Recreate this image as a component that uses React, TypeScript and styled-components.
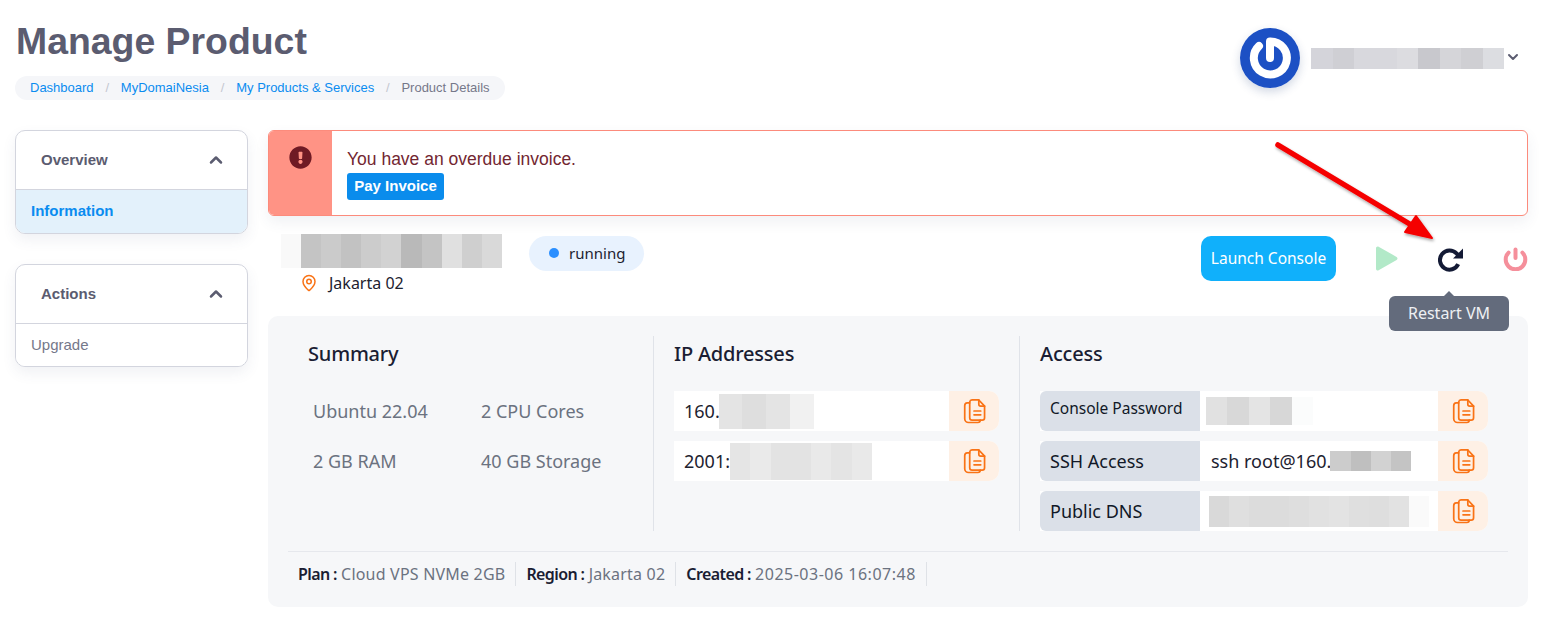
import * as React from 'react';
import styled, { createGlobalStyle } from 'styled-components';
import { ChevronDown, ChevronUp, MapPin } from 'lucide-react';
import { FaExclamationCircle } from 'react-icons/fa';

const GlobalStyle = createGlobalStyle`
    html, body {
        margin: 0;
        padding: 0;
        background: #fff;
        font-family: "Liberation Sans", Arial, sans-serif;
    }
    * {
        box-sizing: border-box;
    }
`;

const contentFont = `"Noto Sans", "Open Sans", sans-serif`;

const Page = styled.div`
    width: 1542px;
    height: 617px;
    padding: 0 14px 0 15px;
    overflow: hidden;
`;

const TopBar = styled.header`
    display: flex;
    justify-content: space-between;
    height: 130px;
`;

const TitleBlock = styled.div`
    padding-top: 19px;
`;

const Title = styled.h1`
    margin: 0 0 12px 1px;
    font-size: 37.4px;
    line-height: 45px;
    font-weight: 700;
    color: #5b5c70;
`;

const Breadcrumb = styled.nav`
    display: inline-flex;
    align-items: center;
    height: 24px;
    padding: 0 15px 2px;
    border-radius: 12px;
    background: #f5f6f9;
    font-size: 13px;
`;

const Crumb = styled.span<{ $current?: boolean }>`
    color: ${(p) => (p.$current ? '#75788a' : '#0a8cf0')};
`;

const CrumbSlash = styled.span`
    margin: 0 11.8px;
    color: #c4c6d0;
`;

const UserMenu = styled.div`
    display: flex;
    align-items: center;
    height: 60px;
    margin: 28px 7px 0 0;
`;

const Avatar = styled.div`
    width: 60px;
    height: 60px;
    margin-right: 11px;
    border-radius: 50%;
    box-shadow: 0 4px 10px rgba(30, 60, 120, 0.2);
    svg {
        display: block;
    }
`;

const UserCaret = styled.span`
    display: flex;
    margin: -3px 0 0 1px;
    color: #5b5c70;
`;

const Columns = styled.div`
    display: grid;
    grid-template-columns: 233px 1260px;
    column-gap: 20px;
`;

const Sidebar = styled.aside`
    display: flex;
    flex-direction: column;
    gap: 30px;
`;

const SideCard = styled.section`
    border: 1px solid #d3d5de;
    border-radius: 10px;
    overflow: hidden;
    background: #fff;
    box-shadow: 0 6px 14px rgba(70, 80, 110, 0.08);
`;

const SideHead = styled.div`
    display: flex;
    align-items: center;
    justify-content: space-between;
    height: 59px;
    padding: 0 21px 1px 25px;
    border-bottom: 1px solid #d3d5de;
    font-size: 15px;
    font-weight: 700;
    color: #5b5c70;
`;

const SideLink = styled.div<{ $active?: boolean }>`
    height: ${(p) => (p.$active ? '43px' : '42px')};
    padding: 0 15px;
    font-size: 15px;
    line-height: 42px;
    font-weight: ${(p) => (p.$active ? 700 : 400)};
    color: ${(p) => (p.$active ? '#0a8cf0' : '#75788a')};
    background: ${(p) => (p.$active ? '#e3f1fb' : '#fff')};
`;

const Main = styled.main`
    position: relative;
`;

const Alert = styled.div`
    display: flex;
    height: 86px;
    border: 1px solid #fc8b7c;
    border-radius: 6px;
    overflow: hidden;
    background: #fff;
    box-shadow: 0 6px 14px rgba(70, 80, 110, 0.08);
`;

const AlertIcon = styled.div`
    display: flex;
    justify-content: center;
    width: 63px;
    padding-top: 15px;
    background: #ff9385;
    color: #6f1a24;
`;

const AlertBody = styled.div`
    padding: 18px 15px 0;
    color: #722631;
    font-size: 17.5px;
    line-height: 20px;
`;

const PayButton = styled.span`
    display: block;
    width: 97px;
    height: 27px;
    margin-top: 4px;
    border-radius: 3px;
    background: #0a8cec;
    color: #fff;
    font-size: 15px;
    font-weight: 700;
    line-height: 25px;
    text-align: center;
`;

const VmBar = styled.div`
    display: flex;
    justify-content: space-between;
    height: 100px;
    padding-top: 18px;
    font-family: ${contentFont};
`;

const VmInfo = styled.div`
    display: flex;
    align-items: flex-start;
    padding-left: 13px;
`;

const VmName = styled.div`
    display: flex;
    flex-direction: column;
    width: 248px;
`;

const Location = styled.div`
    display: flex;
    align-items: center;
    gap: 11px;
    margin: 4px 0 0 19px;
    color: #1d2230;
    font-size: 16px;
    line-height: 22px;
    svg {
        color: #f97316;
    }
`;

const StatusPill = styled.div`
    display: flex;
    align-items: center;
    gap: 10px;
    width: 115px;
    height: 35px;
    margin-top: 2px;
    padding: 0 0 2px 20px;
    border-radius: 18px;
    background: #e8f2fe;
    color: #1d2230;
    font-size: 15px;
`;

const StatusDot = styled.span`
    width: 10px;
    height: 10px;
    border-radius: 50%;
    background: #2b8fff;
`;

const VmActions = styled.div`
    display: flex;
    align-items: flex-start;
`;

const ConsoleButton = styled.div`
    width: 135px;
    height: 45px;
    margin: 2px 39px 0 0;
    border-radius: 10px;
    background: #10b0fb;
    color: #fff;
    font-size: 15.5px;
    line-height: 44px;
    text-align: center;
`;

const IconSlot = styled.div<{ $width: number }>`
    display: flex;
    justify-content: flex-end;
    width: ${(p) => p.$width}px;
    padding-top: 12px;
    svg {
        display: block;
    }
`;

const Tooltip = styled.div`
    position: absolute;
    top: 166px;
    left: 1121px;
    z-index: 3;
    width: 120px;
    height: 35px;
    border-radius: 6px;
    background: #636b7c;
    color: #eef0f3;
    font-family: ${contentFont};
    font-size: 16px;
    line-height: 34px;
    text-align: center;
    &::before {
        content: '';
        position: absolute;
        top: -5px;
        left: 55px;
        border: 5px solid transparent;
        border-top: 0;
        border-bottom-color: #636b7c;
    }
`;

const ArrowOverlay = styled.svg`
    position: absolute;
    top: 0;
    left: 990px;
    z-index: 4;
    overflow: visible;
    pointer-events: none;
`;

const DetailPanel = styled.section`
    height: 291px;
    padding: 20px 20px 0;
    border-radius: 10px;
    background: #f6f7f9;
    font-family: ${contentFont};
`;

const DetailGrid = styled.div`
    display: grid;
    grid-template-columns: 3fr 3fr 4fr;
    height: 195px;
`;

const DetailColumn = styled.div<{ $last?: boolean }>`
    padding: 0 20px;
    border-right: ${(p) => (p.$last ? '0' : '1px solid #e0e3e9')};
`;

const DetailHeading = styled.h2`
    margin: 0 0 19px;
    height: 36px;
    color: #1a1d33;
    font-size: 20px;
    font-weight: 500;
    letter-spacing: -0.2px;
    line-height: 36px;
`;

const SpecGrid = styled.div`
    display: grid;
    grid-template-columns: 168px 1fr;
    grid-auto-rows: 50px;
    padding-left: 5px;
    color: #6b7280;
    font-size: 18px;
    line-height: 40px;
`;

const FieldStack = styled.div`
    display: flex;
    flex-direction: column;
    gap: 10px;
`;

const Field = styled.div`
    display: flex;
    height: 40px;
    border-radius: 0 10px 10px 0;
    overflow: hidden;
    background: #fff;
`;

const FieldLabel = styled.div<{ $small?: boolean }>`
    flex: 0 0 160px;
    padding-left: 10px;
    border-radius: 6px 0 0 6px;
    background: #dbe0e8;
    color: #111827;
    font-size: ${(p) => (p.$small ? '15.5px' : '18px')};
    line-height: ${(p) => (p.$small ? '35px' : '40px')};
`;

const FieldValue = styled.div<{ $pad: number }>`
    display: flex;
    flex: 1;
    align-items: center;
    padding-left: ${(p) => p.$pad}px;
    color: #1d2230;
    font-size: 18px;
    white-space: nowrap;
`;

const CopyButton = styled.div`
    display: flex;
    flex: 0 0 50px;
    align-items: center;
    justify-content: center;
    background: #fef0e5;
    color: #f97316;
`;

const MetaRow = styled.div`
    display: flex;
    margin-top: 20px;
    padding-top: 10px;
    border-top: 1px solid #e6e8ed;
`;

const MetaItem = styled.div`
    padding: 0 10px;
    border-right: 1px solid #dfe2e7;
    font-size: 16px;
    line-height: 24px;
    white-space: nowrap;
`;

const MetaKey = styled.strong`
    color: #1a1d33;
    font-weight: 600;
    letter-spacing: -0.6px;
`;

const MetaValue = styled.span<{ $tracking: number }>`
    color: #6b7280;
    letter-spacing: ${(p) => p.$tracking}px;
`;

const CensorStrip = styled.div<{ $height: number; $shift?: number }>`
    display: flex;
    flex: none;
    height: ${(p) => p.$height}px;
    margin-left: ${(p) => p.$shift ?? 0}px;
`;

const CensorCell = styled.span<{ $color: string; $width: number }>`
    flex: none;
    width: ${(p) => p.$width}px;
    background: ${(p) => p.$color};
`;

function Censor({ cells, width, height, shift }: { cells: string[]; width: number; height: number; shift?: number }) {
    const size = width / cells.length;
    return (
        <CensorStrip $height={height} $shift={shift}>
            {cells.map((color, i) => (
                <CensorCell key={i} $color={color} $width={size} />
            ))}
        </CensorStrip>
    );
}

function CopyIcon() {
    return (
        <svg width="23" height="26" viewBox="0 0 24 26" fill="none" stroke="currentColor" strokeWidth="1.8" strokeLinecap="round" strokeLinejoin="round">
            <path d="M7 3.5V20a2.5 2.5 0 0 0 2.5 2.5h10.5a2.5 2.5 0 0 0 2.5-2.5V8L16.5 1.5H9.5A2.5 2.5 0 0 0 7 3.5Z" />
            <path d="M16.5 1.5V6a2 2 0 0 0 2 2h4" />
            <path d="M7 4.5H4.5A3 3 0 0 0 1.8 7.5V21a4 4 0 0 0 4 4h9.7a2.5 2.5 0 0 0 2.5-2.5" />
            <path d="M11.5 13h7M11.5 17h7" />
        </svg>
    );
}

function RestartIcon() {
    return (
        <svg width="25" height="26" viewBox="0 0 25 26" fill="none">
            <path d="M20.2 18.2A9.6 9.6 0 1 1 18.5 7.4L21 10" stroke="#131a35" strokeWidth="4" />
            <path d="M25 2.5V12.5H15Z" fill="#131a35" />
        </svg>
    );
}

function PlayIcon() {
    return (
        <svg width="23" height="25" viewBox="0 0 23 25">
            <path d="M1 2.2C1 .8 2.4 0 3.6.7l18 10.2c1.2.7 1.2 2.4 0 3.1l-18 10.3C2.4 25 1 24.2 1 22.8Z" fill="#b2e9c8" />
        </svg>
    );
}

function PowerIcon() {
    return (
        <svg width="25" height="25" viewBox="0 0 25 25" fill="none" stroke="#f58f9b" strokeWidth="4" strokeLinecap="round">
            <path d="M19.4 6.6a9.8 9.8 0 1 1-13.8 0" />
            <path d="M12.5 3.5V12" />
        </svg>
    );
}

function BrandMark() {
    return (
        <svg width="60" height="60" viewBox="0 0 60 60">
            <circle cx="30" cy="30" r="30" fill="#1c50c4" />
            <path d="M19 18A16.5 16.5 0 1 0 30 13.5V30" fill="none" stroke="#fff" strokeWidth="8" strokeLinecap="round" strokeLinejoin="round" />
        </svg>
    );
}

const nameCells = ['#f9f9f9', '#c4c4c4', '#cbcbcb', '#c2c2c2', '#cccccc', '#d2d2d2', '#b9b9b9', '#c4c4c4', '#e0e0e0', '#cfcfcf', '#d9d9d9'];
const userCells = ['#d4d4da', '#cfcfd4', '#d8d8dd', '#d8d8dd', '#dcdce0', '#c8c8cd', '#d5d5d9', '#cfcfd3', '#dcdde1'];
const ipv4Cells = ['#e4e4e4', '#dedede', '#e4e4e4', '#f1f1f1'];
const ipv6Cells = ['#e5e5e5', '#eaeaea', '#e3e3e3', '#e3e3e3', '#e9e9e9', '#e4e4e4', '#e9e9e9'];
const passwordCells = ['#e1e1e1', '#d8d8d8', '#e4e4e4', '#d7d7d7', '#fbfcfc'];
const sshCells = ['#cccccc', '#bfbfbf', '#d2d2d2', '#c4c4c4'];
const dnsCells = ['#d9d9d9', '#dfdfdf', '#dcdcdc', '#dcdcdc', '#dedede', '#e1e1e1', '#e3e3e3', '#dfdfdf', '#dedede', '#e2e2e2', '#fafafa'];

export default function App() {
    return (
        <Page>
            <GlobalStyle />
            <TopBar>
                <TitleBlock>
                    <Title>Manage Product</Title>
                    <Breadcrumb>
                        <Crumb>Dashboard</Crumb>
                        <CrumbSlash>/</CrumbSlash>
                        <Crumb>MyDomaiNesia</Crumb>
                        <CrumbSlash>/</CrumbSlash>
                        <Crumb>My Products &amp; Services</Crumb>
                        <CrumbSlash>/</CrumbSlash>
                        <Crumb $current>Product Details</Crumb>
                    </Breadcrumb>
                </TitleBlock>
                <UserMenu>
                    <Avatar>
                        <BrandMark />
                    </Avatar>
                    <Censor cells={userCells} width={193} height={21} />
                    <UserCaret>
                        <ChevronDown size={16} strokeWidth={3} />
                    </UserCaret>
                </UserMenu>
            </TopBar>
            <Columns>
                <Sidebar>
                    <SideCard>
                        <SideHead>
                            Overview
                            <ChevronUp size={20} strokeWidth={3} />
                        </SideHead>
                        <SideLink $active>Information</SideLink>
                    </SideCard>
                    <SideCard>
                        <SideHead>
                            Actions
                            <ChevronUp size={20} strokeWidth={3} />
                        </SideHead>
                        <SideLink>Upgrade</SideLink>
                    </SideCard>
                </Sidebar>
                <Main>
                    <Alert>
                        <AlertIcon>
                            <FaExclamationCircle size={23} />
                        </AlertIcon>
                        <AlertBody>
                            You have an overdue invoice.
                            <PayButton>Pay Invoice</PayButton>
                        </AlertBody>
                    </Alert>
                    <VmBar>
                        <VmInfo>
                            <VmName>
                                <Censor cells={nameCells} width={221} height={34} />
                                <Location>
                                    <MapPin size={18} strokeWidth={2} />
                                    Jakarta 02
                                </Location>
                            </VmName>
                            <StatusPill>
                                <StatusDot />
                                running
                            </StatusPill>
                        </VmInfo>
                        <VmActions>
                            <ConsoleButton>Launch Console</ConsoleButton>
                            <IconSlot $width={23}>
                                <PlayIcon />
                            </IconSlot>
                            <IconSlot $width={65}>
                                <RestartIcon />
                            </IconSlot>
                            <IconSlot $width={65}>
                                <PowerIcon />
                            </IconSlot>
                        </VmActions>
                    </VmBar>
                    <Tooltip>Restart VM</Tooltip>
                    <ArrowOverlay width="170" height="120">
                        <defs>
                            <filter id="arrow-shadow" x="-20%" y="-20%" width="140%" height="140%">
                                <feDropShadow dx="1" dy="2" stdDeviation="1.5" floodColor="#000" floodOpacity="0.35" />
                            </filter>
                        </defs>
                        <g filter="url(#arrow-shadow)">
                            <path d="M20 15L155 96" stroke="#f50000" strokeWidth="5.5" strokeLinecap="round" />
                            <path d="M174 108L147 102L158 86Z" fill="#f50000" stroke="#f50000" strokeWidth="2" strokeLinejoin="round" />
                        </g>
                    </ArrowOverlay>
                    <DetailPanel>
                        <DetailGrid>
                            <DetailColumn>
                                <DetailHeading>Summary</DetailHeading>
                                <SpecGrid>
                                    <span>Ubuntu 22.04</span>
                                    <span>2 CPU Cores</span>
                                    <span>2 GB RAM</span>
                                    <span>40 GB Storage</span>
                                </SpecGrid>
                            </DetailColumn>
                            <DetailColumn>
                                <DetailHeading>IP Addresses</DetailHeading>
                                <FieldStack>
                                    <Field>
                                        <FieldValue $pad={10}>
                                            160.
                                            <Censor cells={ipv4Cells} width={95} height={35} shift={-1} />
                                        </FieldValue>
                                        <CopyButton>
                                            <CopyIcon />
                                        </CopyButton>
                                    </Field>
                                    <Field>
                                        <FieldValue $pad={10}>
                                            2001:
                                            <Censor cells={ipv6Cells} width={142} height={37} />
                                        </FieldValue>
                                        <CopyButton>
                                            <CopyIcon />
                                        </CopyButton>
                                    </Field>
                                </FieldStack>
                            </DetailColumn>
                            <DetailColumn $last>
                                <DetailHeading>Access</DetailHeading>
                                <FieldStack>
                                    <Field>
                                        <FieldLabel $small>Console Password</FieldLabel>
                                        <FieldValue $pad={6}>
                                            <Censor cells={passwordCells} width={107} height={28} />
                                        </FieldValue>
                                        <CopyButton>
                                            <CopyIcon />
                                        </CopyButton>
                                    </Field>
                                    <Field>
                                        <FieldLabel>SSH Access</FieldLabel>
                                        <FieldValue $pad={11}>
                                            ssh root@160.
                                            <Censor cells={sshCells} width={81} height={20} shift={-1} />
                                        </FieldValue>
                                        <CopyButton>
                                            <CopyIcon />
                                        </CopyButton>
                                    </Field>
                                    <Field>
                                        <FieldLabel>Public DNS</FieldLabel>
                                        <FieldValue $pad={9}>
                                            <Censor cells={dnsCells} width={220} height={31} />
                                        </FieldValue>
                                        <CopyButton>
                                            <CopyIcon />
                                        </CopyButton>
                                    </Field>
                                </FieldStack>
                            </DetailColumn>
                        </DetailGrid>
                        <MetaRow>
                            <MetaItem>
                                <MetaKey>Plan :</MetaKey> <MetaValue $tracking={0.2}>Cloud VPS NVMe 2GB</MetaValue>
                            </MetaItem>
                            <MetaItem>
                                <MetaKey>Region :</MetaKey> <MetaValue $tracking={0.2}>Jakarta 02</MetaValue>
                            </MetaItem>
                            <MetaItem>
                                <MetaKey>Created :</MetaKey> <MetaValue $tracking={0.5}>2025-03-06 16:07:48</MetaValue>
                            </MetaItem>
                        </MetaRow>
                    </DetailPanel>
                </Main>
            </Columns>
        </Page>
    );
}
